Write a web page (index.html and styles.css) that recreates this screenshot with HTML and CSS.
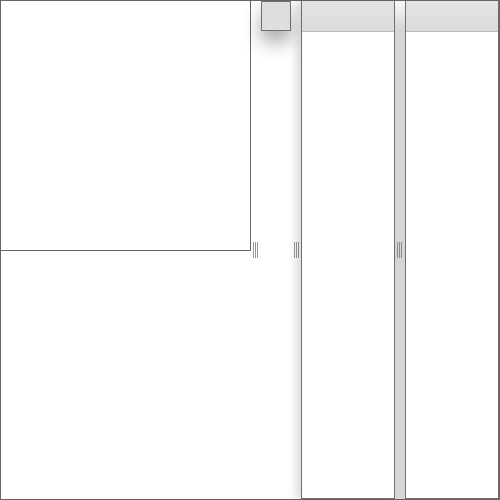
FILE: index.html
```html
<!DOCTYPE html>
<html>
<head>
    <title>Split Panes</title>
    <link rel="stylesheet" href="styles.css">
</head>
<body>
    <div class="frame">
        <div class="pane-left">
            <div class="panel"></div>
        </div>
        <div class="splitter splitter-a"><div class="grip"></div></div>
        <div class="pane-mid">
            <div class="tile"></div>
        </div>
        <div class="splitter splitter-b"><div class="grip"></div></div>
        <div class="column column-first">
            <div class="column-header"></div>
        </div>
        <div class="splitter bar"><div class="grip"></div></div>
        <div class="column">
            <div class="column-header"></div>
        </div>
    </div>
</body>
</html>
```

FILE: styles.css
```css
body {
    margin: 0;
    font-family: "Liberation Sans", Arial, sans-serif;
    background: #fff;
}
.frame {
    width: 500px;
    height: 500px;
    box-sizing: border-box;
    border: 1px solid #666;
    display: flex;
}
.pane-left {
    width: 250px;
    flex: none;
}
.panel {
    height: 250px;
    box-sizing: border-box;
    border-right: 1px solid #666;
    border-bottom: 1px solid #666;
}
.splitter {
    width: 10px;
    flex: none;
    display: flex;
    align-items: center;
}
.grip {
    width: 5px;
    height: 16px;
    background: repeating-linear-gradient(to right, #999 0 1px, transparent 1px 2px);
}
.splitter-a .grip {
    margin-left: 2px;
}
.splitter-b .grip {
    margin-left: 3px;
}
.bar {
    background: linear-gradient(#fafafa, #d6d6d6 28px);
}
.bar .grip {
    margin-left: 2px;
    background: repeating-linear-gradient(to right, #8c8c8c 0 1px, transparent 1px 2px);
}
.pane-mid {
    width: 30px;
    flex: none;
}
.tile {
    width: 30px;
    height: 30px;
    box-sizing: border-box;
    border: 1px solid #707070;
    background: #dedede;
    box-shadow: 0 11px 18px rgba(0, 0, 0, 0.33);
}
.column {
    flex: 1;
    box-sizing: border-box;
    border-left: 1px solid #6e6e6e;
    border-right: 1px solid #6e6e6e;
    border-bottom: 1px solid #6e6e6e;
    background: #fff;
}
.column-first {
    flex: none;
    width: 94px;
    box-shadow: -5px 0 8px rgba(0, 0, 0, 0.14);
}
.column-header {
    height: 30px;
    border-bottom: 1px solid #bdbdbd;
    background: linear-gradient(#e4e4e4, #dcdcdc);
}
```
